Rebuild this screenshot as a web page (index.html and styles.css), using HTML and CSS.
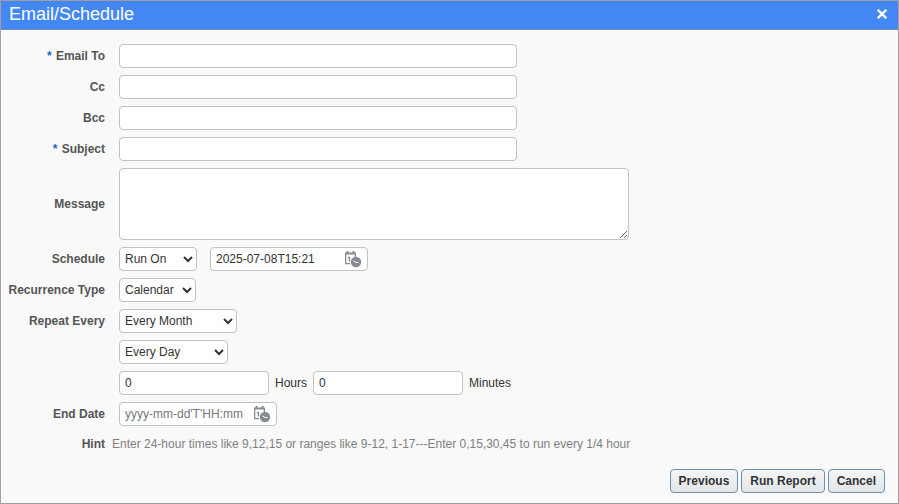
FILE: index.html
```html
<!DOCTYPE html>
<html lang="en">
<head>
    <meta charset="UTF-8">
    <meta name="viewport" content="width=device-width, initial-scale=1.0">
    <title>Email/Schedule</title>
    <link rel="stylesheet" href="styles.css">
</head>
<body>
    <!-- Shared calendar icon -->
    <svg class="symbols" aria-hidden="true">
        <symbol id="calendarClock" viewBox="0 0 17 17">
            <path d="M0 1.500h1.500V0h2v1.500h4V0h2v1.500H11V6H9.700V3.500H1.300V12H5v1.300H0z" fill="#858b90"/>
            <path d="M2.800 6.500H4.500V10.500" fill="none" stroke="#858b90" stroke-width="1.400"/>
            <circle cx="11" cy="11" r="5.200" fill="#858b90"/>
            <path d="M8.500 9.800l2.500 1.700h2.500" fill="none" stroke="#fff" stroke-width="1"/>
        </symbol>
    </svg>

    <form class="dialog" id="scheduleForm">
        <div class="dialog-header">
            <h1>Email/Schedule</h1>
            <button type="button" class="close-button" aria-label="Close">
                <svg width="10" height="10" viewBox="0 0 10 10"><path d="M0.800 0.800l8.400 8.400M9.200 0.800l-8.400 8.400" stroke="#fff" stroke-width="2.300"/></svg>
            </button>
        </div>

        <div class="fields">
            <div class="row">
                <label class="label" for="emailTo"><span class="required">*</span> Email To</label>
                <input type="text" id="emailTo" class="control wide" required>
            </div>
            <div class="row">
                <label class="label" for="cc">Cc</label>
                <input type="text" id="cc" class="control wide">
            </div>
            <div class="row">
                <label class="label" for="bcc">Bcc</label>
                <input type="text" id="bcc" class="control wide">
            </div>
            <div class="row">
                <label class="label" for="subject"><span class="required">*</span> Subject</label>
                <input type="text" id="subject" class="control wide" required>
            </div>
            <div class="row">
                <label class="label" for="message">Message</label>
                <textarea id="message" class="control message"></textarea>
            </div>
            <div class="row">
                <label class="label" for="schedule">Schedule</label>
                <div class="group schedule-group">
                    <select id="schedule" class="control run-select">
                        <option>Run On</option>
                    </select>
                    <div class="date-box control">
                        <input type="text" id="runDate" aria-label="Run date" value="2025-07-08T15:21">
                        <button type="button" class="date-button" aria-label="Choose run date"><svg width="17" height="17"><use href="#calendarClock"/></svg></button>
                    </div>
                </div>
            </div>
            <div class="row">
                <label class="label" for="recurrence">Recurrence Type</label>
                <select id="recurrence" class="control type-select">
                    <option>Calendar</option>
                </select>
            </div>
            <div class="row">
                <label class="label" for="repeatMonth">Repeat Every</label>
                <select id="repeatMonth" class="control month-select">
                    <option>Every Month</option>
                </select>
            </div>
            <div class="row">
                <span class="label"></span>
                <select id="repeatDay" class="control day-select" aria-label="Repeat day">
                    <option>Every Day</option>
                </select>
            </div>
            <div class="row">
                <span class="label"></span>
                <div class="group">
                    <input type="text" id="hours" class="control time" value="0">
                    <label for="hours">Hours</label>
                    <input type="text" id="minutes" class="control time" value="0">
                    <label for="minutes">Minutes</label>
                </div>
            </div>
            <div class="row">
                <label class="label" for="endDate">End Date</label>
                <div class="date-box control">
                    <input type="text" id="endDate" placeholder="yyyy-mm-dd'T'HH:mm">
                    <button type="button" class="date-button" aria-label="Choose end date"><svg width="17" height="17"><use href="#calendarClock"/></svg></button>
                </div>
            </div>
            <div class="row hint-row">
                <span class="label">Hint</span>
                <span class="hint">Enter 24-hour times like 9,12,15 or ranges like 9-12, 1-17---Enter 0,15,30,45 to run every 1/4 hour</span>
            </div>
        </div>

        <div class="dialog-footer">
            <button type="button">Previous</button>
            <button type="submit">Run Report</button>
            <button type="button">Cancel</button>
        </div>
    </form>
</body>
</html>
```
FILE: styles.css
```css
* {
    box-sizing: border-box;
}
body {
    font-family: "Liberation Sans", Arial, sans-serif;
    font-size: 12px;
    margin: 0;
    color: #333;
}
.symbols {
    display: none;
}
.dialog {
    display: flex;
    flex-direction: column;
    min-height: 100vh;
    border: 1px solid #a0a0a0;
    background-color: #f9f9f9;
}
.dialog-header {
    display: flex;
    align-items: center;
    justify-content: space-between;
    height: 29px;
    padding: 0 11px 2px 8px;
    border-bottom: 1px solid #6f8fba;
    background-color: #4387f4;
}
.dialog-header h1 {
    margin: 0;
    font-size: 18px;
    font-weight: normal;
    color: #fff;
}
.close-button {
    display: flex;
    padding: 0;
    border: none;
    background: none;
    cursor: pointer;
}
.fields {
    display: flex;
    flex-direction: column;
    gap: 7px;
    padding-top: 14px;
}
.row {
    display: grid;
    grid-template-columns: 104px 1fr;
    column-gap: 14px;
    align-items: center;
    justify-items: start;
}
.label {
    justify-self: end;
    font-weight: bold;
    color: #555;
    white-space: nowrap;
}
.required {
    margin-right: 1px;
    color: #1a66d6;
}
.control {
    height: 24px;
    padding: 0 5px;
    border: 1px solid #c2c2c2;
    border-radius: 4px;
    background-color: #fff;
    font-family: inherit;
    font-size: 12px;
    color: #333;
}
select.control {
    padding: 0 1px;
}
.wide {
    width: 398px;
}
.message {
    display: block;
    width: 510px;
    height: 72px;
}
.run-select {
    width: 78px;
}
.type-select {
    width: 77px;
}
.month-select {
    width: 118px;
}
.day-select {
    width: 109px;
}
.time {
    width: 150px;
}
.group {
    display: flex;
    align-items: center;
    gap: 6px;
}
.schedule-group {
    gap: 13px;
}
.date-box {
    display: flex;
    align-items: center;
    justify-content: space-between;
    width: 158px;
}
.date-box input {
    width: 124px;
    padding: 0;
    border: none;
    outline: none;
    background: none;
    font: inherit;
    color: inherit;
}
.date-box input::placeholder {
    color: #777;
}
.date-button {
    display: flex;
    padding: 0;
    border: none;
    background: none;
    cursor: pointer;
}
.hint-row {
    column-gap: 7px;
    padding-top: 4px;
}
.hint {
    color: #808080;
}
.dialog-footer {
    display: flex;
    justify-content: flex-end;
    gap: 3px;
    margin-top: auto;
    padding: 10px 13px;
}
.dialog-footer button {
    height: 24px;
    padding: 0 8px;
    border: 1px solid #6f8fa8;
    border-radius: 4px;
    background: linear-gradient(#f4f5f6, #e2e6e9);
    font-family: inherit;
    font-size: 12px;
    font-weight: bold;
    color: #333;
    cursor: pointer;
}
```
